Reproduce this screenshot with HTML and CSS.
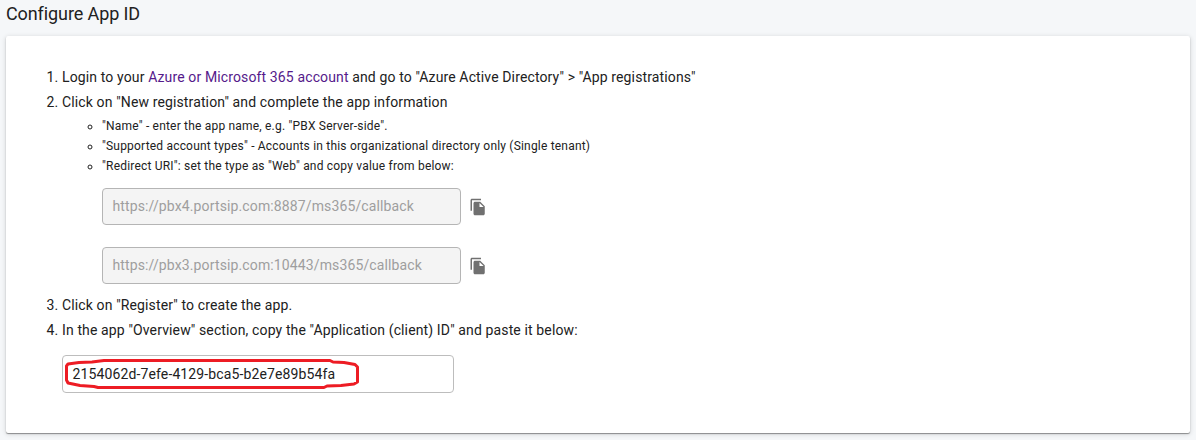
FILE: index.html
```
<!DOCTYPE html>
<html lang="en">
<head>
<meta charset="utf-8">
<title>Configure App ID</title>
<link rel="stylesheet" href="styles.css">
</head>
<body>
<h1 class="title">Configure App ID</h1>
<main class="card">
  <ol class="steps">
    <li>Login to your <a class="link">Azure or Microsoft 365 account</a> and go to "Azure Active Directory" &gt; "App registrations"</li>
    <li>Click on "New registration" and complete the app information
      <ul class="details">
        <li>"Name" - enter the app name, e.g. "PBX Server-side".</li>
        <li>"Supported account types" - Accounts in this organizational directory only (Single tenant)</li>
        <li>"Redirect URI": set the type as "Web" and copy value from below:</li>
      </ul>
      <div class="uris">
        <div class="uri">
          <div class="field readonly">https://pbx4.portsip.com:8887/ms365/callback</div>
          <svg class="copy" viewBox="0 0 24 24"><path d="M16 1H4c-1.100 0-2 .9-2 2v14h2V3h12V1zm-1 4 6 6v10c0 1.100-.9 2-2 2H7.990C6.890 23 6 22.100 6 21l.010-14c0-1.100.890-2 1.990-2h7zm-1 7h5.500L14 6.500V12z"/></svg>
        </div>
        <div class="uri">
          <div class="field readonly">https://pbx3.portsip.com:10443/ms365/callback</div>
          <svg class="copy" viewBox="0 0 24 24"><path d="M16 1H4c-1.100 0-2 .9-2 2v14h2V3h12V1zm-1 4 6 6v10c0 1.100-.9 2-2 2H7.990C6.890 23 6 22.100 6 21l.010-14c0-1.100.890-2 1.990-2h7zm-1 7h5.500L14 6.500V12z"/></svg>
        </div>
      </div>
    </li>
    <li>Click on "Register" to create the app.</li>
    <li>In the app "Overview" section, copy the "Application (client) ID" and paste it below:</li>
  </ol>
  <div class="field client">2154062d-7efe-4129-bca5-b2e7e89b54fa
    <svg class="mark" viewBox="0 0 300 34"><path d="M4 6 15 4.500 28 4 40 2.500H266L269 4 280 4.500 291 6.500 293.500 9V24L290 26 277 27.500 263 28 260 29.500H34L30 28.500 16 27.500 4 25 2.500 22V8z"/></svg>
  </div>
</main>
</body>
</html>
```
FILE: styles.css
```
* { box-sizing: border-box; }
body {
  margin: 0;
  height: 440px;
  overflow: hidden;
  background: #f5f7f9;
  color: #212121;
  font: 14px/25px Roboto, sans-serif;
}
.title {
  margin: 0;
  padding: 2px 6px 0;
  height: 36px;
  font-size: 18px;
  font-weight: 400;
  line-height: 24px;
  letter-spacing: -.1px;
}
.card {
  margin: 0 6px;
  height: 397px;
  padding: 29px 56px;
  background: #fff;
  border-radius: 2px;
  box-shadow: 0 1px 1px rgba(0, 0, 0, .38), 0 1px 5px rgba(0, 0, 0, .16);
}
.steps, .details { margin: 0; padding: 0; }
.steps { letter-spacing: .128px; }
.details {
  padding: 1px 0 0 40px;
  font-size: 12px;
  line-height: 20px;
  letter-spacing: .195px;
  list-style: circle;
}
.link { color: #551a8b; }
.uris { display: grid; gap: 22px; padding: 12px 0 9px 40px; }
.uri { display: flex; align-items: center; gap: 7.500px; }
.field {
  display: flex;
  align-items: center;
  width: 359px;
  height: 37px;
  padding: 0 9.5px;
  border: 1px solid #bdbdbd;
  border-radius: 4px;
  letter-spacing: .125px;
}
.readonly { background: #f4f4f4; border-color: #b5b5b5; color: #9e9e9e; }
.copy { width: 18px; height: 18px; fill: #707070; }
.client { position: relative; width: 392px; height: 38px; margin-top: 12px; }
.mark {
  position: absolute;
  left: 1px;
  top: 2px;
  width: 300px;
  height: 34px;
  fill: none;
  stroke: #ed1c24;
  stroke-width: 3;
  stroke-linejoin: round;
}
```
